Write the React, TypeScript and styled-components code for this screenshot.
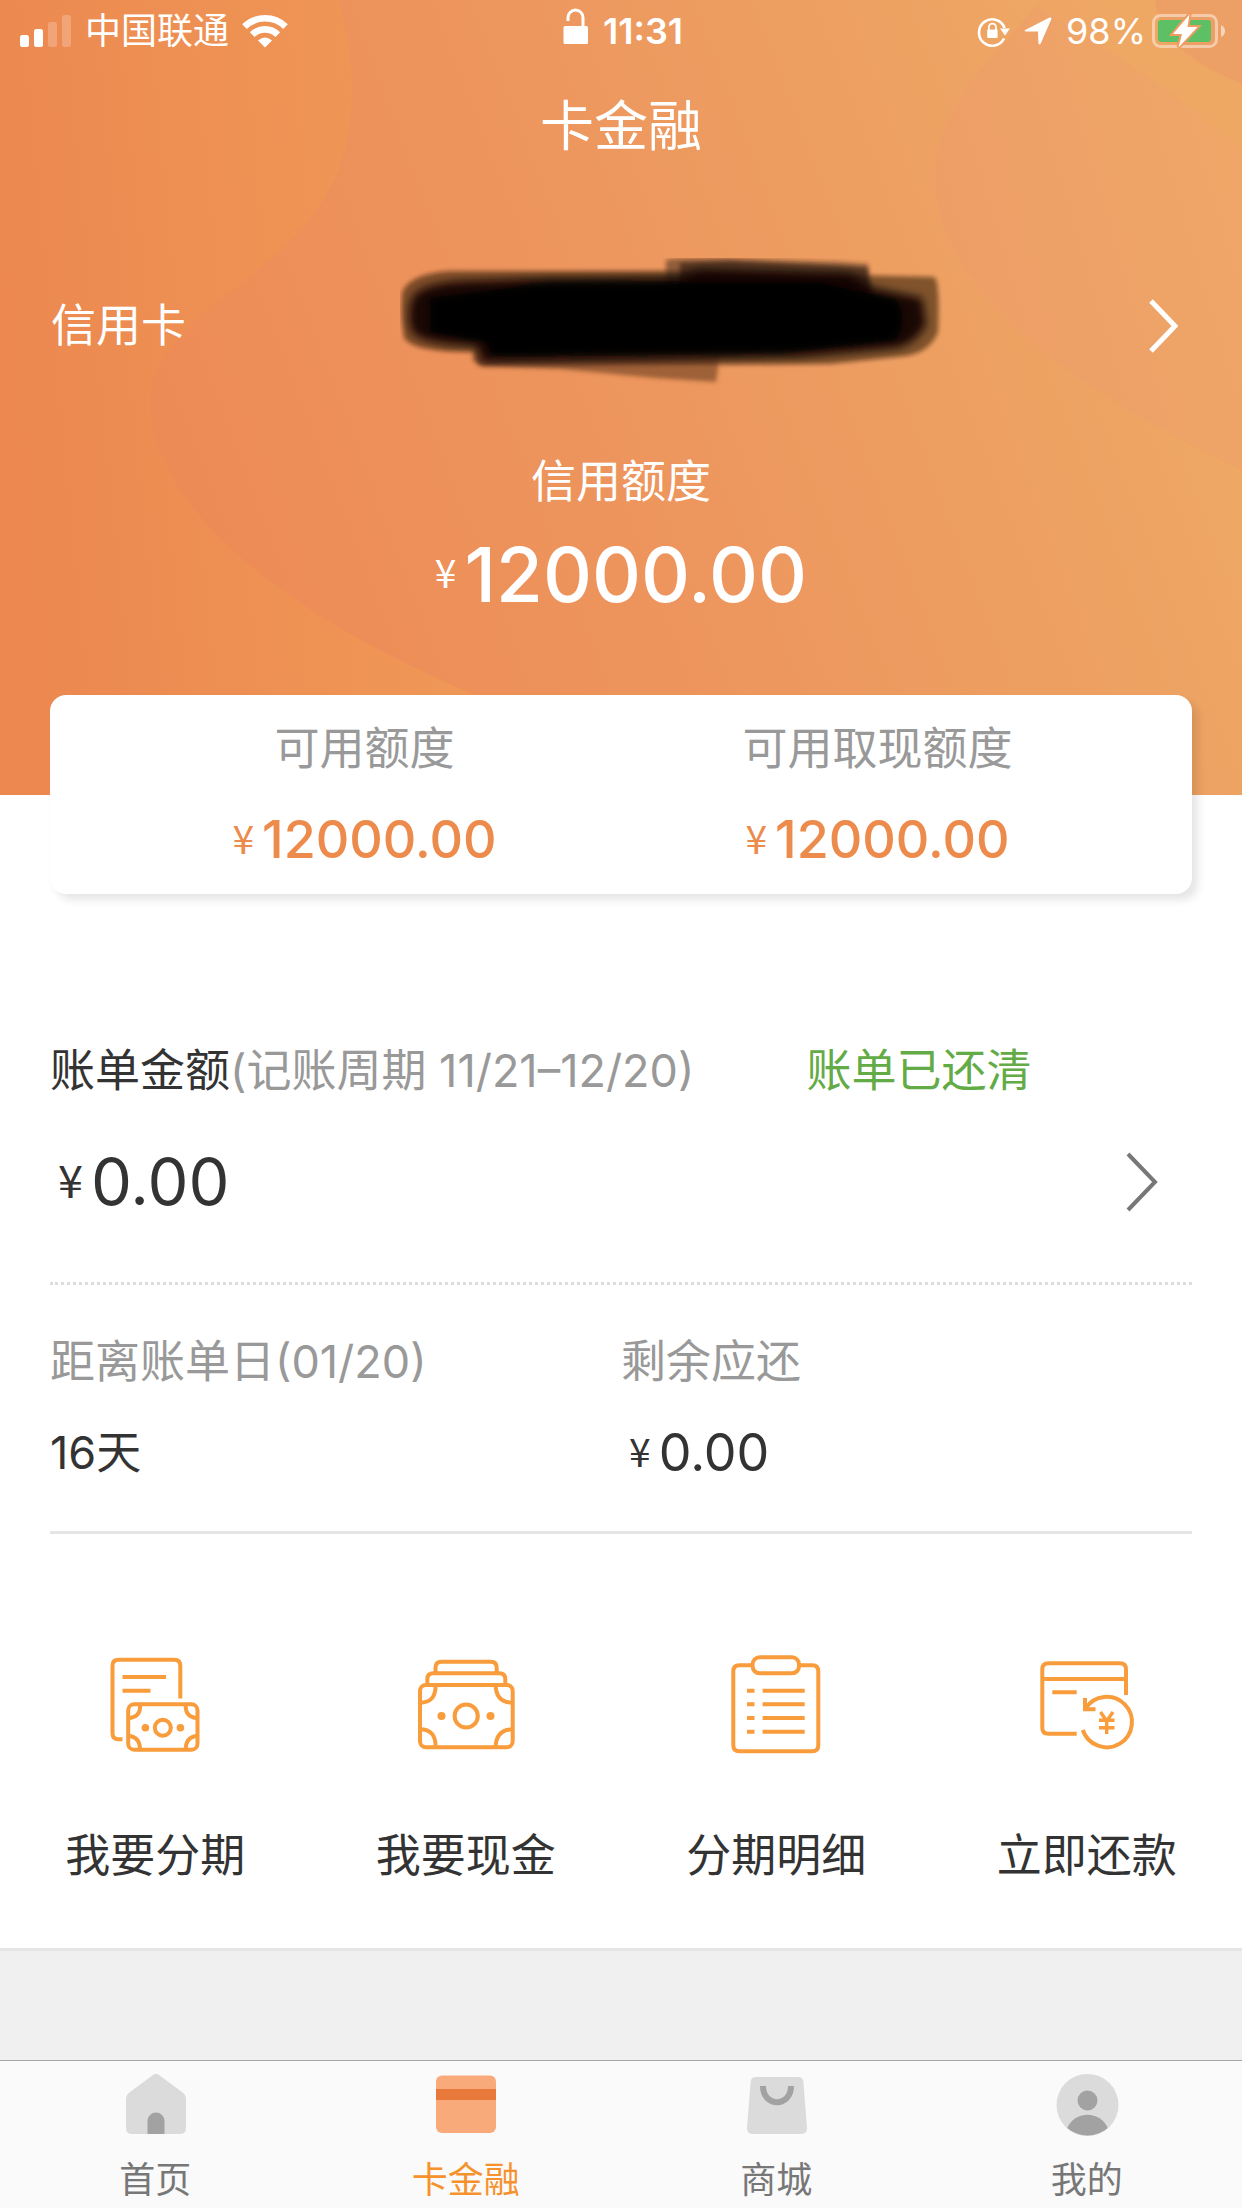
import React from "react";
import styled, { createGlobalStyle } from "styled-components";

const GlobalStyle = createGlobalStyle`
  * { box-sizing: border-box; }
  body {
    margin: 0;
    background: #f0f0f0;
    color: #333;
    font-family: Inter, "Noto Sans CJK SC", sans-serif;
    font-size: 45px;
    line-height: 60px;
  }
  button {
    margin: 0;
    padding: 0;
    border: 0;
    background: none;
    color: inherit;
    font: inherit;
    text-align: left;
    cursor: pointer;
  }
  h1, h2, p, dl, dt, dd { margin: 0; font: inherit; }
  svg { display: block; flex: none; }
`;

const Page = styled.div`
  display: flex;
  flex-direction: column;
  min-height: 100vh;
`;

const Hero = styled.header`
  position: relative;
  isolation: isolate;
  padding-bottom: 171px;
  color: #fff;
`;

const HeroArt = styled.svg`
  position: absolute;
  inset: 0;
  z-index: -1;
  width: 100%;
  height: 100%;
`;

const StatusBar = styled.div`
  display: grid;
  grid-template-columns: 1fr auto 1fr;
  align-items: center;
  height: 62px;
  padding: 0 16px 0 20px;
  font-size: 36px;
`;

const StatusGroup = styled.div<{ $end?: boolean; $gap: number }>`
  display: flex;
  align-items: center;
  justify-content: ${(p) => (p.$end ? "flex-end" : "flex-start")};
  gap: ${(p) => p.$gap}px;
`;

const Clock = styled.time`
  font-weight: 600;
`;

const Title = styled.h1`
  font-size: 54px;
  line-height: 130px;
  text-align: center;
`;

const CardPicker = styled.button`
  display: flex;
  align-items: center;
  width: 100%;
  height: 130px;
  margin-top: 69px;
  padding: 0 64px 0 51px;
`;

const MaskArt = styled.svg`
  margin: 0 202px 0 auto;
`;

const Limit = styled.div`
  display: flex;
  flex-direction: column;
  align-items: center;
  gap: 12px;
  margin-top: 61px;
`;

const Money = styled.span<{ $size: number; $yen: number; $weight: number; $line: number }>`
  display: inline-flex;
  align-items: center;
  gap: 8px;
  font-size: ${(p) => p.$size}px;
  font-weight: ${(p) => p.$weight};
  line-height: ${(p) => p.$line}px;

  & > span {
    padding-bottom: 6px;
    font-family: "Noto Sans CJK SC", sans-serif;
    font-size: ${(p) => p.$yen}px;
    font-weight: 400;
    line-height: 60px;
  }
`;

const Main = styled.main`
  position: relative;
  padding-bottom: 62px;
  border-bottom: 3px solid #e5e5e5;
  background: #fff;
`;

const Summary = styled.dl`
  display: grid;
  grid-template-columns: 1fr 1fr;
  margin: -100px 50px 0;
  padding: 24px 58px 18px;
  border-radius: 16px;
  background: #fff;
  box-shadow: 6px 6px 8px rgba(0, 0, 0, 0.1);
`;

const SummaryItem = styled.div`
  display: flex;
  flex-direction: column;
  align-items: center;
  gap: 25px;
  color: #ed8b4d;
`;

const SummaryValue = styled.dd`
  display: flex;
`;

const Muted = styled.dt`
  color: #999;
`;

const Bill = styled.section`
  margin: 147px 50px 0;
  padding-bottom: 60px;
  border-bottom: 3px dotted #ddd;
`;

const BillHead = styled.div`
  display: flex;
  align-items: center;
  gap: 112px;
  white-space: nowrap;
`;

const Period = styled.span`
  color: #999;
`;

const Paid = styled.span`
  color: #63ab46;
`;

const BillAmount = styled.button`
  display: flex;
  align-items: center;
  justify-content: space-between;
  width: 100%;
  margin-top: 41px;
  padding: 0 34px 0 8px;
`;

const Dues = styled.dl`
  display: grid;
  grid-template-columns: 1fr 1fr;
  margin: 0 50px;
  padding: 47px 0 42px;
  border-bottom: 3px solid #e5e5e5;
`;

const DueValue = styled.dd<{ $indent?: boolean }>`
  display: flex;
  margin-top: 25px;
  padding-left: ${(p) => (p.$indent ? 8 : 0)}px;
  line-height: 72px;
`;

const Actions = styled.nav`
  display: grid;
  grid-template-columns: repeat(4, 1fr);
  padding-top: 121px;
`;

const Action = styled.button`
  display: flex;
  flex-direction: column;
  align-items: center;
  gap: 71px;
`;

const TabBar = styled.nav`
  display: grid;
  grid-template-columns: repeat(4, 1fr);
  height: 148px;
  margin-top: auto;
  border-top: 1px solid #a6a6a6;
  background: #fafafa;
`;

const Tab = styled.button<{ $active?: boolean }>`
  display: flex;
  flex-direction: column;
  align-items: center;
  gap: 20px;
  padding-top: 11px;
  color: ${(p) => (p.$active ? "#f6922e" : "#777")};
  font-size: 36px;
  line-height: 48px;
`;

const Art = () => (
  <HeroArt viewBox="0 0 1242 795" preserveAspectRatio="none" aria-hidden="true">
    <defs>
      <linearGradient id="base" gradientUnits="userSpaceOnUse" x1="200" y1="520" x2="1150" y2="160">
        <stop offset="0" stopColor="#ed8b56" />
        <stop offset="0.45" stopColor="#ed965e" />
        <stop offset="0.85" stopColor="#eda363" />
        <stop offset="1" stopColor="#f0a965" />
      </linearGradient>
      <linearGradient id="left" gradientUnits="userSpaceOnUse" x1="0" y1="300" x2="400" y2="260">
        <stop offset="0" stopColor="#ec8850" />
        <stop offset="1" stopColor="#ef9756" />
      </linearGradient>
      <linearGradient id="right" gradientUnits="userSpaceOnUse" x1="940" y1="250" x2="1242" y2="160">
        <stop offset="0" stopColor="#ed9e67" />
        <stop offset="1" stopColor="#efa667" />
      </linearGradient>
    </defs>
    <path d="M0 0H1242V795H0Z" fill="url(#base)" />
    <path
      d="M0 0H338C356 60 356 120 340 165C300 280 150 310 150 405C152 500 270 610 480 697L700 795H0Z"
      fill="url(#left)"
    />
    <path d="M1040 0C1000 55 935 100 935 180C937 270 1030 370 1242 471V0Z" fill="url(#right)" />
    <path d="M1030 0C1070 30 1150 70 1242 150V84C1190 62 1165 40 1155 0Z" fill="#f0ab62" opacity="0.45" />
    <path d="M1155 0C1160 40 1190 62 1242 84V0Z" fill="#eda066" />
  </HeroArt>
);

const Signal = () => (
  <svg width="52" height="34" viewBox="0 0 52 34" fill="#fff" aria-hidden="true">
    <rect x="0" y="21" width="9" height="12" rx="2.5" />
    <rect x="14" y="15" width="9" height="18" rx="2.5" />
    <rect x="28" y="8" width="9" height="25" rx="2.5" opacity="0.22" />
    <rect x="42" y="1" width="9" height="32" rx="2.5" opacity="0.22" />
  </svg>
);

const Wifi = () => (
  <svg width="46" height="34" viewBox="0 0 46 34" aria-hidden="true">
    <g fill="none" stroke="#fff" strokeWidth="6.6">
      <path d="M2.5 12.6A29.5 29.5 0 0 1 43.5 12.6" />
      <path d="M10.2 20.6A18.2 18.2 0 0 1 35.8 20.6" />
    </g>
    <path d="M16 26.6Q23 20.6 30 26.6L23 33.6Z" fill="#fff" />
  </svg>
);

const OpenLock = () => (
  <svg width="26" height="46" viewBox="0 0 26 46" aria-hidden="true">
    <path d="M5 13V9.5A7.5 7.5 0 0 1 20 9.5V24" fill="none" stroke="#fff" strokeWidth="3" />
    <rect x="0.5" y="18" width="24.5" height="18" rx="1.5" fill="#fff" />
  </svg>
);

const RotationLock = () => (
  <svg width="33" height="32" viewBox="0 0 33 32" aria-hidden="true">
    <path d="M27 23.5A13.2 13.2 0 1 1 27.6 13" fill="none" stroke="#fff" strokeWidth="2.6" />
    <path d="M23 13.5H33L28 20.5Z" fill="#fff" />
    <path d="M11.8 15V12.2A3.6 3.6 0 0 1 19 12.2V15" fill="none" stroke="#fff" strokeWidth="1.8" />
    <rect x="10.2" y="14.5" width="10.4" height="8.5" rx="1" fill="#fff" />
  </svg>
);

const Location = () => (
  <svg width="28" height="28" viewBox="0 0 28 28" aria-hidden="true">
    <path
      d="M1.2 13L25.6 0.6Q27.8 0 27.3 2.2L16.6 26.8Q15 28.6 14.4 26L14 14.4L2 14.6Q-0.4 14.2 1.2 13Z"
      fill="#fff"
    />
  </svg>
);

const Battery = () => (
  <svg width="74" height="38" viewBox="0 0 74 38" aria-hidden="true">
    <rect x="1.5" y="3.5" width="63" height="31" rx="7" fill="none" stroke="#fff" strokeOpacity="0.45" strokeWidth="3" />
    <path d="M69 13Q73 15 73 19T69 25Z" fill="#fff" fillOpacity="0.55" />
    <rect x="6" y="8" width="53" height="22" rx="3" fill="#5dc065" />
    <path d="M37.5 2.5L21 22H30L26.5 35.5L45.5 15H35.5Z" fill="#fff" stroke="#ee9c60" strokeWidth="4" paintOrder="stroke" />
  </svg>
);

const MaskedNumber = () => (
  <MaskArt width="546" height="136" viewBox="0 0 546 136" role="img" aria-label="卡号已遮盖">
    <defs>
      <filter id="soft" x="-5%" y="-15%" width="110%" height="130%">
        <feGaussianBlur stdDeviation="4" />
      </filter>
      <filter id="edge" x="-5%" y="-15%" width="110%" height="130%">
        <feGaussianBlur stdDeviation="2" />
      </filter>
    </defs>
    <g filter="url(#edge)">
      <path d="M2 34Q10 16 48 13L280 13L534 19Q540 22 538 74Q530 94 506 98L430 106L80 108L72 94Q12 94 4 80Q0 56 2 34Z" fill="#2a1508" fillOpacity="0.55" />
      <path d="M266 2Q268 0 330 0L440 4L468 6L472 40H266Z" fill="#3a2210" fillOpacity="0.5" />
      <path d="M280 5L330 3L436 8L468 10L470 34H280Z" fill="#2a1508" fillOpacity="0.6" />
      <path d="M72 98L320 96L316 124L256 120L160 111L84 108Q72 106 72 98Z" fill="#6a3a1c" fillOpacity="0.6" />
    </g>
    <g filter="url(#soft)">
      <path d="M12 40Q20 26 60 23L150 20L280 19L300 12L450 16L474 30L522 40L526 66Q516 86 496 90L400 99L82 104L76 88Q22 86 12 74Q6 58 12 40Z" fill="#0c0603" fillOpacity="0.9" />
      <path d="M30 40L150 25L420 25L496 42Q508 60 496 82L380 94L92 97L86 84L30 74Z" fill="#000" />
    </g>
  </MaskArt>
);

const Chevron = ({ color, width, height, stroke }: { color: string; width: number; height: number; stroke: number }) => (
  <svg width={width} height={height} viewBox={`0 0 ${width} ${height}`} aria-hidden="true">
    <path
      d={`M3 2L${width - 3} ${height / 2}L3 ${height - 2}`}
      fill="none"
      stroke={color}
      strokeWidth={stroke}
    />
  </svg>
);

const LineIcon = ({ children }: { children: React.ReactNode }) => (
  <svg width="100" height="100" viewBox="0 0 100 100" fill="none" stroke="#f89c3c" strokeWidth="4" aria-hidden="true">
    {children}
  </svg>
);

const InstallmentIcon = () => (
  <LineIcon>
    <path d="M17.5 84.3H13.5Q7.5 84.3 7.5 78.3V10.7Q7.5 4.7 13.5 4.7H69.3Q75.3 4.7 75.3 10.7V43.5" />
    <path d="M17.5 22H61M17.5 35.7H45.5" />
    <rect x="23.2" y="49.3" width="69.3" height="45.4" rx="6" />
    <path d="M35 49.3Q36 62.7 23.2 63M80.7 49.3Q80 62.7 92.5 63M35 94.7Q35 81.5 23.2 81M80.7 94.7Q80.7 81.5 92.5 81" />
    <circle cx="57.8" cy="72.7" r="8" />
    <g fill="#f89c3c" stroke="none">
      <circle cx="40.4" cy="72.7" r="3.8" />
      <circle cx="75.4" cy="72.7" r="3.8" />
    </g>
  </LineIcon>
);

const CashIcon = () => (
  <LineIcon>
    <path d="M19.5 18.3V12.7Q19.5 6.7 25.5 6.7H74.7Q80.7 6.7 80.7 12.7V18.3" />
    <path d="M11.3 30V24.3Q11.3 18.3 17.3 18.3H83.3Q89.3 18.3 89.3 24.3V30" />
    <rect x="4" y="30" width="92.7" height="62.3" rx="6" />
    <path d="M19.6 30Q20 47.7 4 47.7M79.6 30Q80 47.7 96.7 47.7M19.6 92.3Q20 74.3 4 74.3M79.6 92.3Q80 74.3 96.7 74.3" />
    <circle cx="50.2" cy="61" r="11.6" />
    <g fill="#f89c3c" stroke="none">
      <circle cx="25.5" cy="61" r="4" />
      <circle cx="74.5" cy="61" r="4" />
    </g>
  </LineIcon>
);

const DetailIcon = () => (
  <LineIcon>
    <path d="M26.6 10.3H13.3Q7.3 10.3 7.3 16.3V90.3Q7.3 96.3 13.3 96.3H86.3Q92.3 96.3 92.3 90.3V16.3Q92.3 10.3 86.3 10.3H73" />
    <rect x="26.6" y="2.3" width="46.4" height="16" rx="7" />
    <path d="M21 35.7H28.5M36.6 35.7H78.7M21 49.3H28.5M36.6 49.3H78.7M21 63H28.5M36.6 63H78.7M21 76.7H28.5M36.6 76.7H78.7" />
  </LineIcon>
);

const RepayIcon = () => (
  <LineIcon>
    <path d="M39.7 78.7H11.3Q5.3 78.7 5.3 72.7V14.3Q5.3 8.3 11.3 8.3H83Q89 8.3 89 14.3V40" />
    <path d="M5.3 24H89M15.3 37.3H39.7" />
    <path d="M45.8 75A25.2 25.2 0 1 0 48.5 53.5" />
    <path d="M48 43V54.3H58.5" />
    <path d="M63.5 57L69.7 66L76 57M69.7 65V79M62 65.3H77.5M62 72.7H77.5" strokeWidth="3.4" />
  </LineIcon>
);

const HomeIcon = () => (
  <svg width="64" height="64" viewBox="-1 0 64 64" aria-hidden="true">
    <path d="M29 3Q32 0.5 35 3L58 20Q62 23 62 27V56Q62 62 56 62H8Q2 62 2 56V27Q2 23 6 20Z" fill="#dbdbdb" />
    <path d="M23.5 62V49A8.5 8.5 0 0 1 40.5 49V62Z" fill="#a2a2a2" />
  </svg>
);

const CardIcon = () => (
  <svg width="64" height="64" viewBox="0 0 64 64" aria-hidden="true">
    <rect x="2" y="3.5" width="60" height="57.5" rx="6" fill="#f9aa7a" />
    <path d="M2 17H62V28H2Z" fill="#e9793a" />
  </svg>
);

const BagIcon = () => (
  <svg width="64" height="64" viewBox="-1 0 64 64" aria-hidden="true">
    <path d="M11 5H53Q58 5 58.4 10L62 56Q62 62 56 62H8Q2 62 2 56L5.6 10Q6 5 11 5Z" fill="#dbdbdb" />
    <path d="M18 14C18 35.5 46 35.5 46 14" fill="none" stroke="#a2a2a2" strokeWidth="6" />
  </svg>
);

const PersonIcon = () => (
  <svg width="64" height="64" viewBox="0 0 64 64" aria-hidden="true">
    <circle cx="32.5" cy="33" r="31" fill="#dbdbdb" />
    <circle cx="32.5" cy="28.5" r="10" fill="#a2a2a2" />
    <path d="M12.3 56A22 22 0 0 1 52.7 56A31 31 0 0 1 12.3 56Z" fill="#a2a2a2" />
  </svg>
);

const actions = [
  { label: "我要分期", Icon: InstallmentIcon },
  { label: "我要现金", Icon: CashIcon },
  { label: "分期明细", Icon: DetailIcon },
  { label: "立即还款", Icon: RepayIcon },
];

const tabs = [
  { label: "首页", Icon: HomeIcon },
  { label: "卡金融", Icon: CardIcon, active: true },
  { label: "商城", Icon: BagIcon },
  { label: "我的", Icon: PersonIcon },
];

const limits = [
  { label: "可用额度", value: "12000.00" },
  { label: "可用取现额度", value: "12000.00" },
];

export default function App() {
  return (
    <Page>
      <GlobalStyle />
      <Hero>
        <Art />
        <StatusBar>
          <StatusGroup $gap={13}>
            <Signal />
            <span>中国联通</span>
            <Wifi />
          </StatusGroup>
          <StatusGroup $gap={14}>
            <OpenLock />
            <Clock>11:31</Clock>
          </StatusGroup>
          <StatusGroup $gap={14} $end>
            <RotationLock />
            <Location />
            <StatusGroup $gap={6}>
              <span>98%</span>
              <Battery />
            </StatusGroup>
          </StatusGroup>
        </StatusBar>
        <Title>卡金融</Title>
        <CardPicker type="button">
          <span>信用卡</span>
          <MaskedNumber />
          <Chevron color="#fff" width={30} height={54} stroke={5} />
        </CardPicker>
        <Limit>
          <p>信用额度</p>
          <Money $size={76} $yen={39} $weight={500} $line={100}>
            <span>¥</span>12000.00
          </Money>
        </Limit>
      </Hero>

      <Main>
        <Summary>
          {limits.map((item) => (
            <SummaryItem key={item.label}>
              <Muted>{item.label}</Muted>
              <SummaryValue>
                <Money $size={52} $yen={39} $weight={500} $line={72}>
                  <span>¥</span>
                  {item.value}
                </Money>
              </SummaryValue>
            </SummaryItem>
          ))}
        </Summary>

        <Bill>
          <BillHead>
            <h2>
              账单金额<Period>(记账周期 11/21–12/20)</Period>
            </h2>
            <Paid>账单已还清</Paid>
          </BillHead>
          <BillAmount type="button">
            <Money $size={65} $yen={45} $weight={400} $line={80}>
              <span>¥</span>0.00
            </Money>
            <Chevron color="#777" width={33} height={60} stroke={4} />
          </BillAmount>
        </Bill>

        <Dues>
          <div>
            <Muted>距离账单日(01/20)</Muted>
            <DueValue>16天</DueValue>
          </div>
          <div>
            <Muted>剩余应还</Muted>
            <DueValue $indent>
              <Money $size={52} $yen={39} $weight={400} $line={72}>
                <span>¥</span>0.00
              </Money>
            </DueValue>
          </div>
        </Dues>

        <Actions>
          {actions.map(({ label, Icon }) => (
            <Action type="button" key={label}>
              <Icon />
              <span>{label}</span>
            </Action>
          ))}
        </Actions>
      </Main>

      <TabBar>
        {tabs.map(({ label, Icon, active }) => (
          <Tab type="button" key={label} $active={active} aria-current={active ? "page" : undefined}>
            <Icon />
            <span>{label}</span>
          </Tab>
        ))}
      </TabBar>
    </Page>
  );
}
